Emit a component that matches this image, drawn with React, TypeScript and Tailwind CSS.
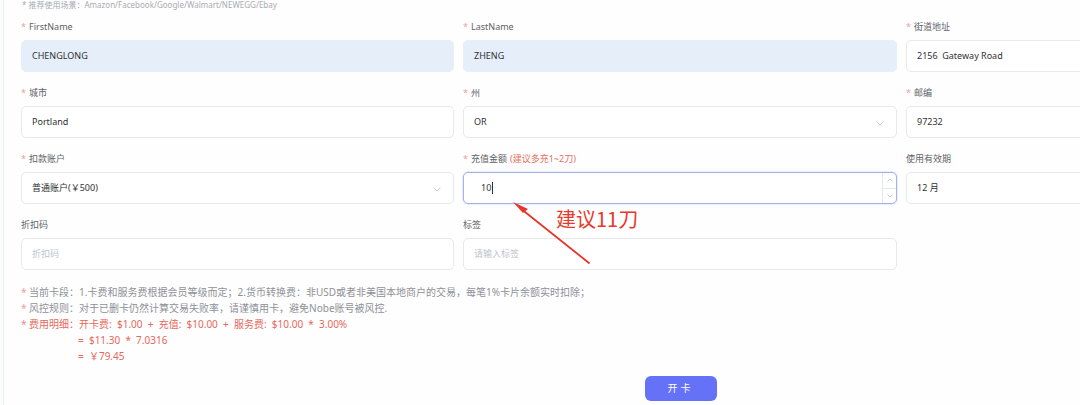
import React from "react";

const Star = () => <span className="text-[#ef9d9d] mr-[3px] text-[9px]">*</span>;

function Label({ req, children }: { req?: boolean; children: React.ReactNode }) {
  return (
    <div className="h-[14px] leading-[14px] mb-[6px] text-[9px] text-[#606266] flex items-center whitespace-nowrap">
      {req && <Star />}
      {children}
    </div>
  );
}

const Chevron = () => (
  <svg width="8" height="5" viewBox="0 0 8 5" className="absolute right-[12px] top-[14px]">
    <path d="M0.5 0.5 L4 4 L7.5 0.5" fill="none" stroke="#c4c7cc" strokeWidth="0.9" />
  </svg>
);

function Field({
  label,
  req,
  value,
  placeholder,
  filled,
  select,
}: {
  label: React.ReactNode;
  req?: boolean;
  value?: string;
  placeholder?: string;
  filled?: boolean;
  select?: boolean;
}) {
  return (
    <div>
      <Label req={req}>{label}</Label>
      <div
        className={
          "relative h-[32px] rounded-[5px] px-[10px] flex items-center text-[9px] " +
          (filled ? "bg-[#e6eefa] border border-[#e6eefa]" : "bg-white border border-[#e7e9ec]")
        }
      >
        {value ? (
          <span className="text-[#303133] whitespace-pre">{value}</span>
        ) : (
          <span className="text-[#c0c4cc]">{placeholder}</span>
        )}
        {select && <Chevron />}
      </div>
    </div>
  );
}

export default function App() {
  return (
    <div className="w-[1080px] h-[405px] overflow-hidden relative bg-[#fbfcfc] font-['Noto_Sans','Noto_Sans_CJK_SC',sans-serif]">
      <div className="ml-[3px] h-full w-[1400px] border-l border-[#eceef1] bg-[#fefefe] pl-[17px]">
        <div className="h-[20px] text-[8px] leading-[10px] text-[#a8acb1] pl-[1px] whitespace-nowrap">
          * 推荐使用场景：Amazon/Facebook/Google/Walmart/NEWEGG/Ebay
        </div>
        <div className="grid grid-cols-[433px_434px_434px] gap-x-[9px] gap-y-[14px]">
          <Field req label="FirstName" value="CHENGLONG" filled />
          <Field req label="LastName" value="ZHENG" filled />
          <Field req label="街道地址" value="2156  Gateway Road" />

          <Field req label="城市" value="Portland" />
          <Field req label="州" value="OR" select />
          <Field req label="邮编" value="97232" />

          <Field req label="扣款账户" value="普通账户(￥500)" select />
          <div>
            <Label req>
              充值金额 <span className="ml-[3px] text-[#e4705f]">(建议多充1~2刀)</span>
            </Label>
            <div className="relative h-[32px] rounded-[5px] bg-white border border-[#a2b3ec] shadow-[0_0_0_1px_rgba(140,160,235,0.18)] flex items-center pl-[17px] text-[9px]">
              <span className="text-[#303133]">10</span>
              <span className="w-[1px] h-[12px] bg-[#303133] ml-[0.5px]" />
              <div className="absolute right-0 top-0 h-full w-[14px] border-l border-[#e4e7ed] flex flex-col">
                <div className="flex-1 flex items-center justify-center border-b border-[#e4e7ed]">
                  <svg width="6" height="4" viewBox="0 0 6 4">
                    <path d="M0.5 3.5 L3 1 L5.5 3.5" fill="none" stroke="#b8bcc4" strokeWidth="0.8" />
                  </svg>
                </div>
                <div className="flex-1 flex items-center justify-center">
                  <svg width="6" height="4" viewBox="0 0 6 4">
                    <path d="M0.5 0.5 L3 3 L5.5 0.5" fill="none" stroke="#b8bcc4" strokeWidth="0.8" />
                  </svg>
                </div>
              </div>
            </div>
          </div>
          <Field label="使用有效期" value="12 月" />

          <Field label="折扣码" placeholder="折扣码" />
          <Field label="标签" placeholder="请输入标签" />
          <div />
        </div>

        <div className="mt-[14px] text-[10px] leading-[16px] whitespace-pre">
          <div className="text-[#8e9197]">
            <span className="text-[#ef9d9d]">*</span> 当前卡段：1.卡费和服务费根据会员等级而定；2.货币转换费：非USD或者非美国本地商户的交易，每笔1%卡片余额实时扣除；
          </div>
          <div className="text-[#8e9197]">
            <span className="text-[#ef9d9d]">*</span> 风控规则：对于已删卡仍然计算交易失败率，请谨慎用卡，避免Nobe账号被风控.
          </div>
          <div className="text-[#e4695c]">
            <span className="text-[#ef8f8f]">*</span> 费用明细：开卡费:  $1.00  +  充值:  $10.00  +  服务费:  $10.00  *  3.00%
          </div>
          <div className="text-[#e4695c] pl-[57px]">=  $11.30  *  7.0316</div>
          <div className="text-[#e4695c] pl-[57px]">=  ￥79.45</div>
        </div>

        <div className="w-[1319px] flex justify-center mt-[12px]">
          <button className="w-[72px] h-[25px] rounded-[6px] bg-[#6571f7] text-white text-[10px] tracking-[3px]">
            开卡
          </button>
        </div>
      </div>

      <svg className="absolute left-0 top-0 pointer-events-none" width="1080" height="405">
        <path d="M589 263 L520 208" stroke="#e8352b" strokeWidth="1.8" strokeLinecap="round" />
        <path d="M513 202 L528 209 L523 213 Z" fill="#e8352b" />
      </svg>
      <div className="absolute left-[556px] top-[205px] text-[20px] leading-[28px] text-[#e8382d] font-['Noto_Sans_CJK_SC',sans-serif]">
        建议11刀
      </div>
    </div>
  );
}
